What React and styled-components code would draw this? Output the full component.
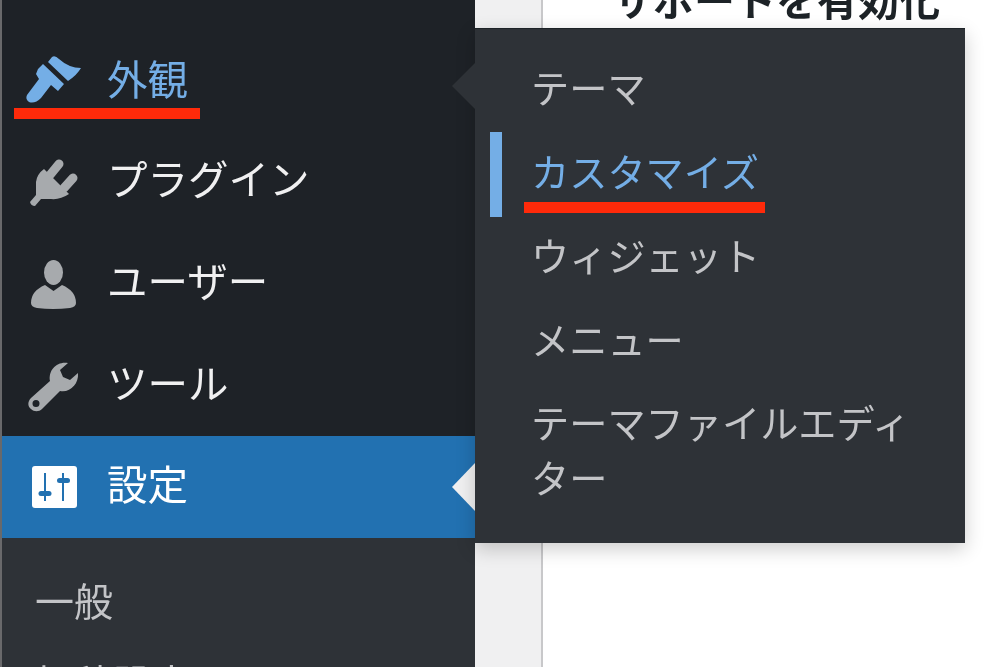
import React from 'react';
import styled, { createGlobalStyle } from 'styled-components';

const GlobalStyle = createGlobalStyle`
    html, body {
        margin: 0;
        padding: 0;
        height: 100%;
        overflow: hidden;
        background: #fff;
        font-family: "Noto Sans CJK JP", "Liberation Sans", sans-serif;
    }
`;

const BrushIcon = ({ color }) => (
    <IconSvg viewBox="25 50 60 60">
        <path
            fill={color}
            d="M48 62 L52 57 Q55 55 59 59 Q69 68 81 68 Q77 75 68 81 Z M38 69 L43 64 L64 84 L58 91 L51 85 L41 98 Q35 104 29 102 Q25 99 27 95 L39 79 L36 74 Z"
        />
    </IconSvg>
);

const PlugIcon = ({ color }) => (
    <IconSvg viewBox="25 151 60 60">
        <path
            fill={color}
            d="M44 168 L69 193 Q60 199 51 198 L41 198 L35 205 Q31 205 30 201 L36 194 L36 181 Q37 173 44 168 Z"
        />
        <path
            stroke={color}
            strokeWidth="9"
            strokeLinecap="round"
            d="M50 174 L59 163 M64 187 L73 177"
        />
    </IconSvg>
);

const UserIcon = ({ color }) => (
    <IconSvg viewBox="25 254 60 60">
        <ellipse fill={color} cx="53.5" cy="272.5" rx="9.5" ry="12.5" />
        <path
            fill={color}
            d="M31 303 Q31 291 45 285 L53.5 291 L62 285 Q76 291 76 303 Q76 307 70 308 Q53 310 37 308 Q31 307 31 303 Z"
        />
    </IconSvg>
);

const WrenchIcon = ({ color }) => (
    <IconSvg viewBox="25 355 60 60">
        <path
            fill={color}
            fillRule="evenodd"
            d="M68 362 C57 360 48 369 50 380 L31 397 C27 401 28 406 31 408 C34 411 39 411 42 408 L60 390 C70 392 79 383 78 372 L70 379 L63 376 L60 369 Z M36 399 A3.5 3.5 0 1 0 36 406 A3.5 3.5 0 1 0 36 399 Z"
        />
    </IconSvg>
);

const SettingsIcon = () => (
    <IconSvg viewBox="25 456 60 60">
        <rect x="32" y="465" width="45" height="42" rx="3" fill="#fff" />
        <path
            stroke="#2271b1"
            strokeWidth="2"
            d="M45 472 L45 500 M63 472 L63 500"
        />
        <rect x="38.5" y="490" width="13" height="5" rx="2.5" fill="#2271b1" />
        <rect x="57" y="477" width="13" height="5" rx="2.5" fill="#2271b1" />
    </IconSvg>
);

const menuItems = [
    { label: '外観', Icon: BrushIcon, color: '#74aee6', marked: true },
    { label: 'プラグイン', Icon: PlugIcon, color: '#a7aaad' },
    { label: 'ユーザー', Icon: UserIcon, color: '#a7aaad' },
    { label: 'ツール', Icon: WrenchIcon, color: '#a7aaad' },
];

const flyoutItems = ['テーマ', 'カスタマイズ', 'ウィジェット', 'メニュー', 'テーマファイルエディター'];

const App = () => {
    return (
        <Page>
            <GlobalStyle />
            <Sidebar>
                {menuItems.map(({ label, Icon, color, marked }) => (
                    <MenuRow key={label}>
                        <Icon color={color} />
                        <MenuLabel $current={marked}>{label}</MenuLabel>
                        {marked && <RowMark />}
                    </MenuRow>
                ))}
                <ActiveRow>
                    <SettingsIcon />
                    <MenuLabel>設定</MenuLabel>
                </ActiveRow>
                <SubMenu>
                    <SubItem>一般</SubItem>
                    <SubItem>投稿設定</SubItem>
                </SubMenu>
            </Sidebar>

            <Content>
                <Gutter />
                <Main>
                    <Heading>サポートを有効化</Heading>
                </Main>
            </Content>

            <Flyout>
                {flyoutItems.map((item, i) => (
                    <FlyoutItem key={item} $current={i === 1}>
                        {item}
                        {i === 1 && <FlyoutMark />}
                    </FlyoutItem>
                ))}
            </Flyout>
        </Page>
    );
};

export default App;

const Page = styled.div`
    position: relative;
    display: flex;
    width: 1000px;
    height: 667px;
    overflow: hidden;
    filter: blur(0.5px);
`;

const Sidebar = styled.nav`
    flex: 0 0 475px;
    box-sizing: border-box;
    display: flex;
    flex-direction: column;
    padding-top: 29px;
    background: #1e2227;
    border-left: 2px solid #69696b;
`;

const MenuRow = styled.div`
    position: relative;
    flex: 0 0 102px;
    box-sizing: border-box;
    display: flex;
    align-items: center;
    gap: 22px;
    padding-left: 23px;
    font-size: 40.5px;
    color: #f0f0f1;
`;

const ActiveRow = styled(MenuRow)`
    flex-basis: 102px;
    margin-top: -1px;
    background: #2271b1;
    color: #fff;

    &::after {
        content: '';
        position: absolute;
        top: 27px;
        right: 0;
        border-style: solid;
        border-width: 24px 23px 24px 0;
        border-color: transparent #f0f0f1 transparent transparent;
    }
`;

const IconSvg = styled.svg`
    flex: none;
    width: 60px;
    height: 60px;
`;

const MenuLabel = styled.span`
    color: ${(props) => (props.$current ? '#74aee6' : 'inherit')};
    line-height: 1;
    padding-bottom: ${(props) => (props.$current ? '4px' : '7px')};
`;

const RowMark = styled.i`
    position: absolute;
    left: 12px;
    top: 79px;
    width: 186px;
    height: 11px;
    background: #ff2a0a;
`;

const SubMenu = styled.div`
    flex: 1;
    display: flex;
    flex-direction: column;
    padding: 32px 0 0 33px;
    background: #2e3237;
`;

const SubItem = styled.div`
    flex: 0 0 82px;
    font-size: 39px;
    line-height: 58px;
    color: #c3c4c7;
    white-space: nowrap;
`;

const Content = styled.main`
    flex: 1;
    display: flex;
    background: #fff;
`;

const Gutter = styled.div`
    flex: 0 0 66px;
    background: #f0f0f1;
    border-right: 2px solid #c8c8ca;
`;

const Main = styled.div`
    flex: 1;
    padding-left: 69px;
`;

const Heading = styled.h2`
    margin: -31px 0 0;
    font-size: 41px;
    line-height: 58px;
    font-weight: 700;
    color: #1d2327;
    white-space: nowrap;
`;

const Flyout = styled.div`
    position: absolute;
    top: 28px;
    left: 475px;
    width: 490px;
    height: 515px;
    box-sizing: border-box;
    padding-top: 20px;
    background: #2e3237;
    border-top: 1px solid #1d2327;
    box-shadow: 0 6px 18px rgba(0, 0, 0, 0.2);

    &::before {
        content: '';
        position: absolute;
        top: 34px;
        left: -23px;
        border-style: solid;
        border-width: 23px 23px 23px 0;
        border-color: transparent #2e3237 transparent transparent;
    }
`;

const FlyoutItem = styled.div`
    position: relative;
    padding: 9px 50px 17px 56px;
    font-size: 38.2px;
    line-height: 58px;
    color: ${(props) => (props.$current ? '#74aee6' : '#c3c4c7')};

    &:last-child {
        line-height: 55px;
    }

    ${(props) =>
        props.$current &&
        `
        &::before {
            content: '';
            position: absolute;
            top: -1px;
            bottom: 0;
            left: 15px;
            width: 12px;
            background: #74aee6;
        }
    `}
`;

const FlyoutMark = styled.i`
    position: absolute;
    left: 49px;
    top: 69px;
    width: 241px;
    height: 11px;
    background: #ff2a0a;
`;
